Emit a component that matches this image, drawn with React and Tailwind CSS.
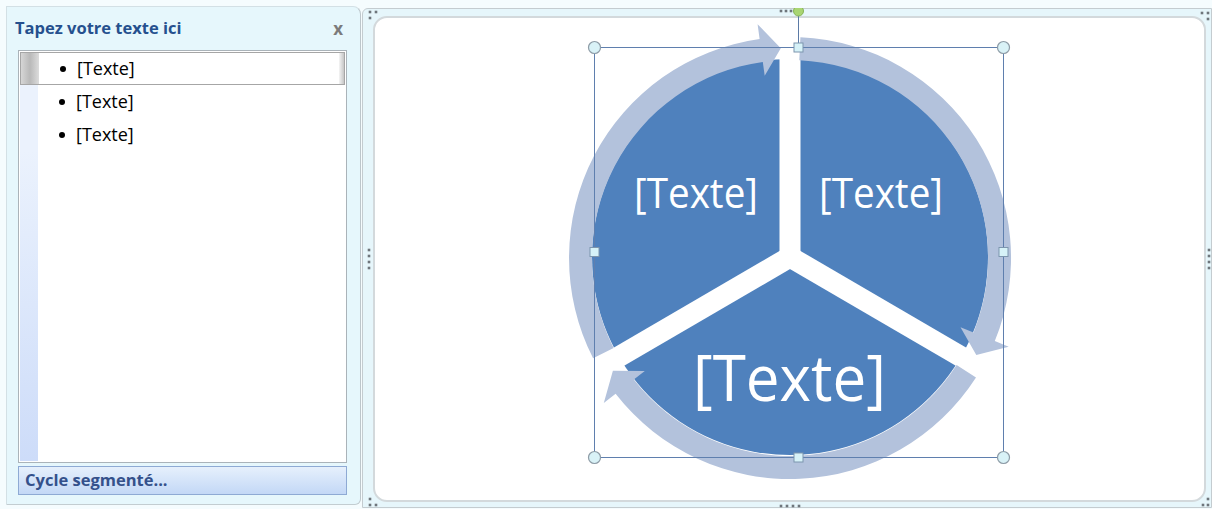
import React from 'react';

const CX = 790;
const CY = 258;

const pt = (r, deg) => {
  const t = (deg * Math.PI) / 180;
  return [CX + r * Math.sin(t), CY - r * Math.cos(t)];
};
const f = (p) => p.map((n) => n.toFixed(1)).join(' ');

// arc arrow running clockwise from a1 to a2 (degrees from top)
const arrowPath = (a1, a2) => {
  const ri = 198, ro = 221, rm = 210, hw = 26, hd = 5.4;
  const ah = a2 - hd;
  return `M ${f(pt(ro, a1))} A ${ro} ${ro} 0 0 1 ${f(pt(ro, ah))} L ${f(pt(rm + hw, ah))} L ${f(pt(rm, a2))} L ${f(pt(rm - hw, ah))} L ${f(pt(ri, ah))} A ${ri} ${ri} 0 0 0 ${f(pt(ri, a1))} Z`;
};

const dots = [
  [370, 12], [376, 12], [370, 18],
  [1202, 13], [1208, 13], [1208, 19],
  [1208, 499], [1203, 505], [1208, 505],
  [370, 499], [370, 505], [376, 505],
  [781, 11], [786, 11], [791, 11],
  [781, 506], [787, 506], [793, 506], [799, 506],
  [369, 250], [369, 256], [369, 262], [369, 268],
  [1209, 250], [1209, 256], [1209, 262], [1209, 268],
];

const Diagram = () => (
  <svg
    className="absolute left-[-1px] top-[-1px] pointer-events-none"
    width="850"
    height="500"
    viewBox="362 8 850 500"
  >
    {/* pie */}
    <circle cx={CX} cy={257} r={198} fill="#4f81bd" />
    {[0, 120, 240].map((a) => {
      const [x, y] = pt(212, a);
      return <line key={a} x1={CX} y1={CY - 1} x2={x} y2={y} stroke="#fff" strokeWidth="21" />;
    })}
    <circle cx={CX} cy={CY - 1} r={12} fill="#fff" />

    {/* cycle arrows */}
    <path d={arrowPath(243, 357.5)} fill="#b3c2dc" />
    <path d={arrowPath(2.7, 117.5)} fill="#b3c2dc" />
    <path d={arrowPath(122.7, 237.5)} fill="#b3c2dc" />

    <g fill="#fff" fontFamily="'Open Sans', 'Noto Sans', sans-serif">
      <text x="634" y="208" fontSize="42" textLength="124" lengthAdjust="spacingAndGlyphs">[Texte]</text>
      <text x="819" y="208" fontSize="42" textLength="124" lengthAdjust="spacingAndGlyphs">[Texte]</text>
      <text x="693" y="401" fontSize="64" textLength="193" lengthAdjust="spacingAndGlyphs">[Texte]</text>
    </g>

    {/* selection frame */}
    <line x1="798.5" y1="47" x2="798.5" y2="15" stroke="#5b7aa6" strokeWidth="1" />
    <rect x="594.5" y="47.5" width="409" height="410" fill="none" stroke="#5f7fae" strokeWidth="1" />
    {[[594.5, 47.5], [1003.5, 47.5], [594.5, 457.5], [1003.5, 457.5]].map(([x, y]) => (
      <circle key={`${x}-${y}`} cx={x} cy={y} r="6" fill="#d9f2f7" stroke="#8d9ba6" strokeWidth="1.2" />
    ))}
    {[[798.5, 47.5], [594.5, 252], [1003.5, 252], [798.5, 457.5]].map(([x, y]) => (
      <rect key={`${x}-${y}`} x={x - 4.5} y={y - 4.5} width="9" height="9" fill="#d6f2f8" stroke="#7d95ae" strokeWidth="1" />
    ))}

    {dots.map(([x, y]) => (
      <rect key={`${x}-${y}`} x={x - 1.3} y={y - 1.3} width="2.6" height="2.6" fill="#6f767c" />
    ))}
    <circle cx="798.5" cy="11" r="5" fill="#a9d572" stroke="#86b356" strokeWidth="1" />
  </svg>
);

const Row = ({ selected }) => (
  <div className={`flex h-[33px] ${selected ? 'border border-[#a6a6a6]' : ''}`}>
    <div
      className={`w-[18px] shrink-0 ${selected ? 'bg-gradient-to-r from-[#d6d6d6] via-[#b9b9b9] to-[#dcdcdc]' : 'bg-[#ebf2fd]'}`}
    />
    <div className="flex-1 flex items-center bg-white">
      <span className="ml-[21px] w-[6px] h-[6px] rounded-full bg-black" />
      <span className="ml-[11px] text-[18px] text-black">[Texte]</span>
    </div>
    {selected && <div className="w-[5px] bg-gradient-to-r from-[#f4f4f4] to-[#c6c6c6]" />}
  </div>
);

export default function App() {
  return (
    <div
      className="w-[1212px] h-[509px] bg-[#f5fcfe] flex items-start pl-[6px] overflow-hidden"
      style={{ fontFamily: "'Open Sans', 'Noto Sans', sans-serif" }}
    >
      {/* text pane */}
      <div className="mt-[6px] w-[355px] h-[499px] bg-[#e6f7fc] border border-[#d3e0e5] border-r-[#bcc6cb] border-b-[#c3cdd1] rounded-tr-[8px] rounded-br-[6px] flex flex-col pl-[11px] pr-[13px]">
        <div className="h-[43px] flex items-center justify-between">
          <span className="-ml-[3px] text-[16.5px] font-bold text-[#25508e]">Tapez votre texte ici</span>
          <span className="mr-[4px] text-[17px] font-bold text-[#7b7b7b] leading-none">x</span>
        </div>
        <div className="h-[413px] border border-[#aab3b9] bg-white p-px flex flex-col">
          <Row selected />
          <Row />
          <Row />
          <div className="flex-1 flex">
            <div className="w-[18px] bg-gradient-to-b from-[#ebf2fd] to-[#cddcf9]" />
            <div className="flex-1 bg-white" />
          </div>
        </div>
        <div className="mt-[3px] h-[29px] border border-[#8eaad4] bg-gradient-to-b from-[#e6f0fc] to-[#c3d8f6] flex items-center pl-[6px]">
          <span className="text-[16.5px] font-bold text-[#34518b]">Cycle segmenté...</span>
        </div>
      </div>

      {/* drawing canvas */}
      <div className="ml-px mt-[8px] w-[850px] h-[500px] relative bg-[#e6f6fb] border border-[#c4ccd0] rounded-tl-[6px] flex pl-[10px] pt-[7px] pr-[5px] pb-[5px]">
        <div className="flex-1 bg-white border-2 border-[#d3d9dc] rounded-[14px]" />
        <Diagram />
      </div>
    </div>
  );
}
